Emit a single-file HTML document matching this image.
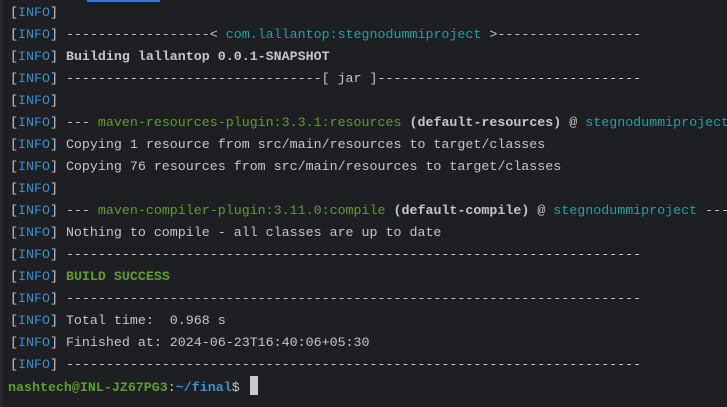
<!DOCTYPE html>
<html><head><style>
html,body{margin:0;padding:0;background:#1e1f22;width:727px;height:407px;overflow:hidden}
.t{position:absolute;left:10px;top:2px;font-family:"Liberation Mono",monospace;font-size:13.32px;line-height:22px;color:#c4c6cc;white-space:pre}
.b{color:#3b8fd0}.g{color:#5e9e2e}.c{color:#21a1a1}.w{font-weight:bold}
.edge{position:absolute;left:0;top:0;width:3px;height:407px;background:#27282c}
.bar{position:absolute;left:87px;top:0;width:73px;height:2px;background:#3574f0}
.cur{display:inline-block;width:8px;height:19px;background:#c8c9cc;vertical-align:-4px;margin-left:2px}
</style></head><body>
<div class="edge"></div><div class="bar"></div>
<div class="t">[<span class="b">INFO</span>]
[<span class="b">INFO</span>] ------------------&lt; <span class="c">com.lallantop:stegnodummiproject</span> &gt;------------------
[<span class="b">INFO</span>] <span class="w">Building lallantop 0.0.1-SNAPSHOT</span>
[<span class="b">INFO</span>] --------------------------------[ jar ]---------------------------------
[<span class="b">INFO</span>]
[<span class="b">INFO</span>] --- <span class="g">maven-resources-plugin:3.3.1:resources</span> <span class="w">(default-resources)</span> @ <span class="c">stegnodummiproject</span> ---
[<span class="b">INFO</span>] Copying 1 resource from src/main/resources to target/classes
[<span class="b">INFO</span>] Copying 76 resources from src/main/resources to target/classes
[<span class="b">INFO</span>]
[<span class="b">INFO</span>] --- <span class="g">maven-compiler-plugin:3.11.0:compile</span> <span class="w">(default-compile)</span> @ <span class="c">stegnodummiproject</span> ---
[<span class="b">INFO</span>] Nothing to compile - all classes are up to date
[<span class="b">INFO</span>] ------------------------------------------------------------------------
[<span class="b">INFO</span>] <span class="g w">BUILD SUCCESS</span>
[<span class="b">INFO</span>] ------------------------------------------------------------------------
[<span class="b">INFO</span>] Total time:  0.968 s
[<span class="b">INFO</span>] Finished at: 2024-06-23T16:40:06+05:30
[<span class="b">INFO</span>] ------------------------------------------------------------------------
<span class="g w" style="margin-left:-2px">nashtech@INL-JZ67PG3</span>:<span class="b w">~/final</span>$ <span class="cur"></span></div>
</body></html>
